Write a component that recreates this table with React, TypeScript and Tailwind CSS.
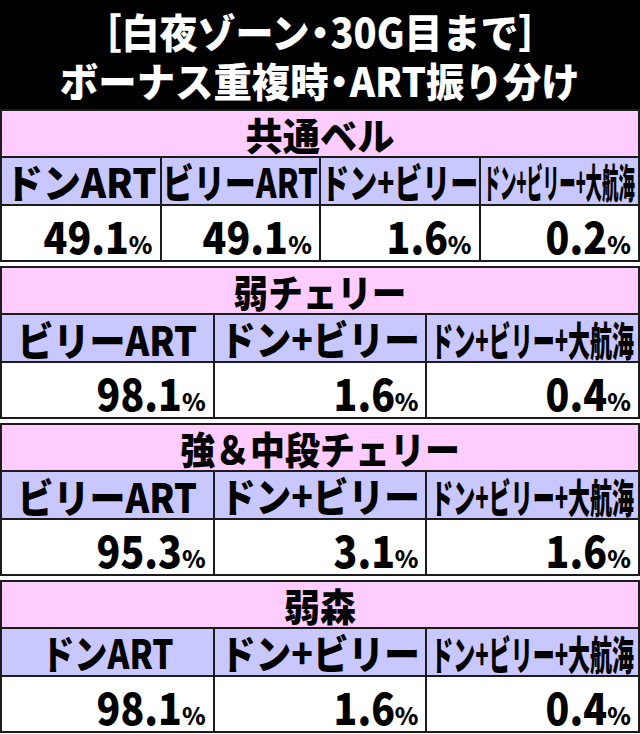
type Col = { label: string; size: string; value: string };
type Block = { title: string; titleScale: string; cols: Col[] };

// labels are condensed by setting a small font and stretching it back up vertically,
// so the layout box stays as wide as the visible text
const blocks: Block[] = [
  {
    title: '共通ベル',
    titleScale: 'scale-x-[0.98]',
    cols: [
      { label: 'ドンART', size: 'text-[38px] scale-y-[1.053]', value: '49.1' },
      { label: 'ビリーART', size: 'text-[31.2px] scale-y-[1.282]', value: '49.1' },
      { label: 'ドン+ビリー', size: 'text-[28px] scale-y-[1.429]', value: '1.6' },
      { label: 'ドン+ビリー+大航海', size: 'text-[16.4px] scale-y-[2.439]', value: '0.2' },
    ],
  },
  {
    title: '弱チェリー',
    titleScale: 'scale-x-[0.91]',
    cols: [
      { label: 'ビリーART', size: 'text-[36px] scale-y-[1.111]', value: '98.1' },
      { label: 'ドン+ビリー', size: 'text-[35.6px] scale-y-[1.124]', value: '1.6' },
      { label: 'ドン+ビリー+大航海', size: 'text-[22px] scale-y-[1.818]', value: '0.4' },
    ],
  },
  {
    title: '強＆中段チェリー',
    titleScale: 'scale-x-[0.92]',
    cols: [
      { label: 'ビリーART', size: 'text-[36px] scale-y-[1.111]', value: '95.3' },
      { label: 'ドン+ビリー', size: 'text-[35.6px] scale-y-[1.124]', value: '3.1' },
      { label: 'ドン+ビリー+大航海', size: 'text-[22px] scale-y-[1.818]', value: '1.6' },
    ],
  },
  {
    title: '弱森',
    titleScale: 'scale-x-[0.95]',
    cols: [
      { label: 'ドンART', size: 'text-[33.2px] scale-y-[1.205]', value: '98.1' },
      { label: 'ドン+ビリー', size: 'text-[35.6px] scale-y-[1.124]', value: '1.6' },
      { label: 'ドン+ビリー+大航海', size: 'text-[22px] scale-y-[1.818]', value: '0.4' },
    ],
  },
];

function Table({ block }: { block: Block }) {
  const grid = block.cols.length === 4 ? 'grid-cols-4' : 'grid-cols-3';
  return (
    <div className="flex flex-col gap-[2px] border-2 border-[#1c1c1c] bg-[#1c1c1c]">
      <div className="flex h-[45px] items-center justify-center bg-[#ffccff]">
        <span className={`inline-block whitespace-nowrap text-[38px] leading-[45px] font-black ${block.titleScale}`}>
          {block.title}
        </span>
      </div>
      <div className={`grid ${grid} gap-[2px]`}>
        {block.cols.map((c, i) => (
          <div key={i} className="flex h-[46px] items-center justify-center bg-[#c8c8ff]">
            <span className={`inline-block whitespace-nowrap leading-none font-black ${c.size}`}>
              {c.label}
            </span>
          </div>
        ))}
      </div>
      <div className={`grid ${grid} gap-[2px]`}>
        {block.cols.map((c, i) => (
          <div key={i} className="flex h-[54px] items-center justify-end bg-white pr-[7px] pt-[4px]">
            <span className="flex items-baseline font-black">
              <span className="inline-block origin-right scale-x-[0.89] text-[44px] leading-[44px]">{c.value}</span>
              <span className="text-[24px] leading-none">%</span>
            </span>
          </div>
        ))}
      </div>
    </div>
  );
}

export default function App() {
  return (
    <div className="w-[640px] bg-white font-['Noto_Sans_CJK_JP',sans-serif] text-black">
      <header className="flex h-[109px] flex-col items-center bg-black pt-[7px] text-white">
        <div className="inline-block scale-x-[0.95] whitespace-nowrap text-[40px] leading-[49px] font-black">
          ［白夜ゾーン<span className="-mx-[9px]">・</span>30G目まで］
        </div>
        <div className="inline-block scale-x-[0.96] whitespace-nowrap text-[40px] leading-[49px] font-black">
          ボーナス重複時<span className="-mx-[9px]">・</span>ART振り分け
        </div>
      </header>
      <div className="flex flex-col gap-[4px]">
        {blocks.map((b, i) => (
          <Table key={i} block={b} />
        ))}
      </div>
    </div>
  );
}
